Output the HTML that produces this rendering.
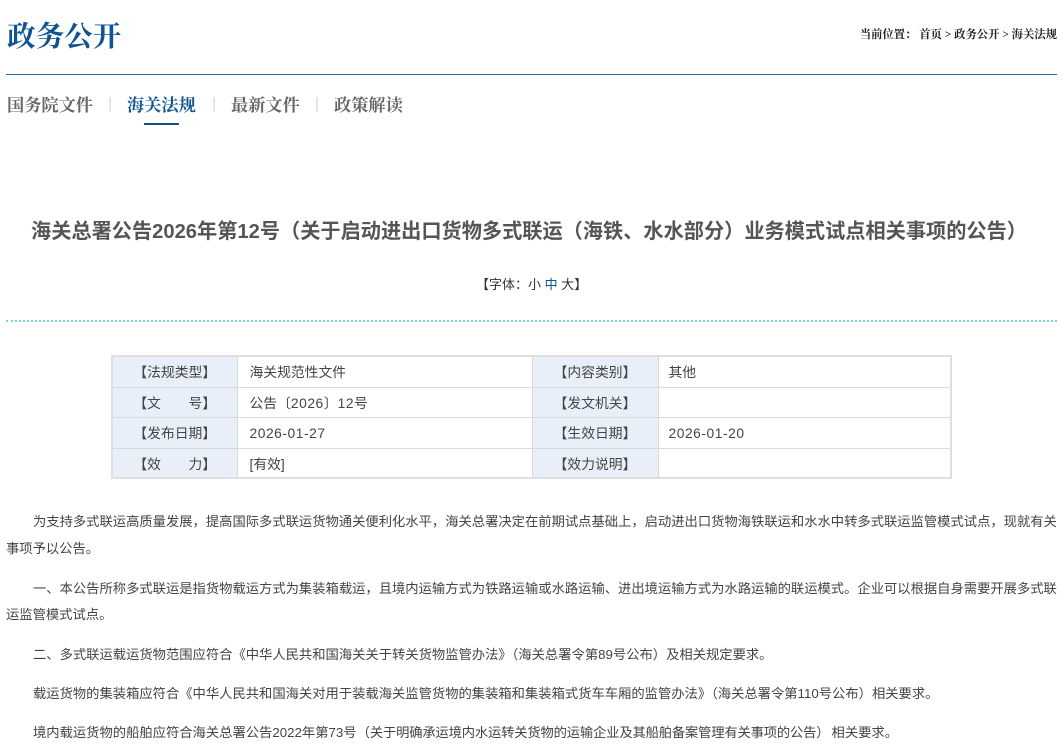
<!DOCTYPE html>
<html lang="zh-CN"><head><meta charset="utf-8"><title>政务公开</title>
<style>
html,body{margin:0;padding:0;background:#fff}
body{width:1063px;height:748px;overflow:hidden;position:relative;font-family:"Liberation Sans","Noto Sans CJK SC",sans-serif;color:#444}
.a{position:absolute;white-space:nowrap}
.s{font-family:"Liberation Serif","Noto Serif CJK SC",serif;font-weight:700}
.n{top:95px;font-size:17.2px;line-height:22px;color:#666}
.sep{position:absolute;top:97px;width:2px;height:15px;background:#e6e6e6}
.p{font-size:13.31px;line-height:20px;color:#444}
table{position:absolute;left:111px;top:355px;width:841px;border-collapse:collapse;table-layout:fixed;font-size:13.8px;line-height:18px;color:#444;border:2px solid #dfdfe2}
td{border:1px solid #d8d9dd;padding:2px 0 0;height:27.7px;box-sizing:content-box}
tr:last-child td{padding-top:3px;height:25.2px}
td.h{background:#e9eff8;text-align:center}
td.v{padding-left:12px}
.l{letter-spacing:.55px}
</style></head><body>
<div class="a s" style="left:7px;top:18px;font-size:28.6px;line-height:40px;color:#0f5391">政务公开</div>
<div class="a s" style="right:6px;top:26px;font-size:11.35px;line-height:18px;color:#222">当前位置： 首页 &gt; 政务公开 &gt; 海关法规</div>
<div class="a" style="left:6px;top:74px;width:1051px;height:1px;background:#1f6ca8"></div>
<div class="a s n" style="left:7px">国务院文件</div><div class="sep" style="left:109px"></div>
<div class="a s n" style="left:127px;color:#0f5391">海关法规</div><div class="sep" style="left:213px"></div>
<div class="a s n" style="left:231px">最新文件</div><div class="sep" style="left:316px"></div>
<div class="a s n" style="left:334px">政策解读</div>
<div class="a" style="left:144px;top:123px;width:35px;height:2px;background:#0f5391"></div>
<div class="a" style="left:31px;top:218px;font-size:20.2px;line-height:28px;font-weight:700;color:#555">海关总署公告2026年第12号（关于启动进出口货物多式联运（海铁、水水部分）业务模式试点相关事项的公告）</div>
<div class="a" style="left:476px;top:276px;font-size:13px;line-height:18px;color:#333">【字体：小 <span style="color:#0f5391">中</span> 大】</div>
<div class="a" style="left:6px;top:320px;width:1051px;border-top:2px dotted #74dcd6"></div>
<table>
<colgroup><col style="width:125px"><col style="width:295px"><col style="width:126px"><col></colgroup>
<tr><td class="h">【法规类型】</td><td class="v">海关规范性文件</td><td class="h">【内容类别】</td><td class="v" style="padding-left:10px">其他</td></tr>
<tr><td class="h">【文&emsp;&emsp;号】</td><td class="v">公告〔<span class="l">2026</span>〕<span class="l">12</span>号</td><td class="h">【发文机关】</td><td class="v"></td></tr>
<tr><td class="h">【发布日期】</td><td class="v l">2026-01-27</td><td class="h">【生效日期】</td><td class="v l" style="padding-left:10px">2026-01-20</td></tr>
<tr><td class="h">【效&emsp;&emsp;力】</td><td class="v">[有效]</td><td class="h">【效力说明】</td><td class="v"></td></tr>
</table>
<div class="a p" style="left:33px;top:512px">为支持多式联运高质量发展，提高国际多式联运货物通关便利化水平，海关总署决定在前期试点基础上，启动进出口货物海铁联运和水水中转多式联运监管模式试点，现就有关</div>
<div class="a p" style="left:6px;top:539px">事项予以公告。</div>
<div class="a p" style="left:33px;top:579px">一、本公告所称多式联运是指货物载运方式为集装箱载运，且境内运输方式为铁路运输或水路运输、进出境运输方式为水路运输的联运模式。企业可以根据自身需要开展多式联</div>
<div class="a p" style="left:6px;top:605px">运监管模式试点。</div>
<div class="a p" style="left:33px;top:645px">二、多式联运载运货物范围应符合《中华人民共和国海关关于转关货物监管办法》（海关总署令第89号公布）及相关规定要求。</div>
<div class="a p" style="left:33px;top:684px">载运货物的集装箱应符合《中华人民共和国海关对用于装载海关监管货物的集装箱和集装箱式货车车厢的监管办法》（海关总署令第110号公布）相关要求。</div>
<div class="a p" style="left:33px;top:723px">境内载运货物的船舶应符合海关总署公告2022年第73号（<span style="letter-spacing:-.17px">关于明确承运境内水运转关货物的运输企业及其船舶备案管理有关事项的公告</span>）<span style="margin-left:2px">相关要求。</span></div>
</body></html>
